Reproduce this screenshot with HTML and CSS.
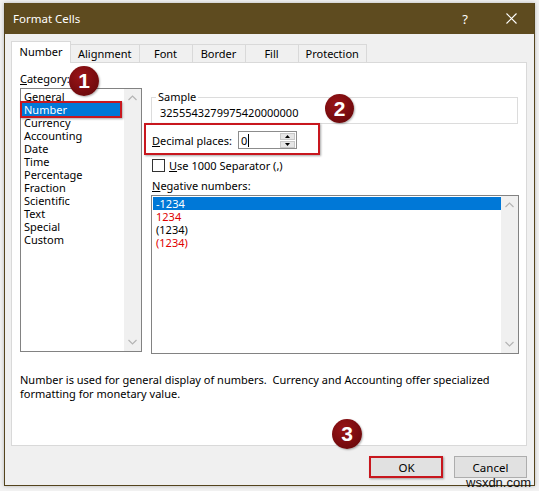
FILE: index.html
```html
<!DOCTYPE html>
<html lang="en">
<head>
    <meta charset="UTF-8">
    <meta name="viewport" content="width=device-width, initial-scale=1.0">
    <title>Format Cells</title>
    <link rel="stylesheet" href="styles.css">
</head>
<body>
    <div class="dialog">
        <div class="title-bar">
            <span class="title">Format Cells</span>
            <span class="title-btn help">?</span>
            <span class="title-btn close">
                <svg width="11" height="11" viewBox="0 0 11 11"><path d="M0.5 0.5 L10.5 10.5 M10.5 0.5 L0.5 10.5" stroke="#fff" stroke-width="1.1" fill="none"/></svg>
            </span>
        </div>
        <div class="dialog-body">
            <div class="tabs">
                <div class="tab active">Number</div>
                <div class="tab">Alignment</div>
                <div class="tab">Font</div>
                <div class="tab">Border</div>
                <div class="tab">Fill</div>
                <div class="tab">Protection</div>
            </div>
            <div class="tab-panel">
                <div class="panel-top">
                    <div class="category">
                        <div class="label"><u>C</u>ategory:</div>
                        <div class="listbox cat-list">
                            <ul class="items">
                                <li>General</li>
                                <li class="selected">Number</li>
                                <li>Currency</li>
                                <li>Accounting</li>
                                <li>Date</li>
                                <li>Time</li>
                                <li>Percentage</li>
                                <li>Fraction</li>
                                <li>Scientific</li>
                                <li>Text</li>
                                <li>Special</li>
                                <li>Custom</li>
                            </ul>
                            <div class="scrollbar">
                                <svg width="9" height="6" viewBox="0 0 9 6"><path d="M0.5 5 L4.5 1 L8.5 5" stroke="#b4b4b4" stroke-width="1.2" fill="none"/></svg>
                                <svg width="9" height="6" viewBox="0 0 9 6"><path d="M0.5 1 L4.5 5 L8.5 1" stroke="#b4b4b4" stroke-width="1.2" fill="none"/></svg>
                            </div>
                        </div>
                    </div>
                    <div class="options">
                        <fieldset class="sample">
                            <legend>Sample</legend>
                            <div class="sample-value">3255543279975420000000</div>
                        </fieldset>
                        <div class="decimal-row">
                            <span class="decimal-label"><u>D</u>ecimal places:</span>
                            <div class="spin-input">
                                <span class="spin-value">0</span>
                                <div class="spin-buttons">
                                    <span class="spin-btn"><svg width="7" height="4" viewBox="0 0 7 4"><path d="M0 4 L3.5 0 L7 4 Z" fill="#000"/></svg></span>
                                    <span class="spin-btn"><svg width="7" height="4" viewBox="0 0 7 4"><path d="M0 0 L3.5 4 L7 0 Z" fill="#000"/></svg></span>
                                </div>
                            </div>
                        </div>
                        <div class="check-row">
                            <span class="checkbox"></span>
                            <span><u>U</u>se 1000 Separator (,)</span>
                        </div>
                        <div class="label neg-label"><u>N</u>egative numbers:</div>
                        <div class="listbox neg-list">
                            <ul class="items">
                                <li class="selected">-1234</li>
                                <li class="red">1234</li>
                                <li>(1234)</li>
                                <li class="red">(1234)</li>
                            </ul>
                            <div class="scrollbar">
                                <svg width="9" height="6" viewBox="0 0 9 6"><path d="M0.5 5 L4.5 1 L8.5 5" stroke="#b4b4b4" stroke-width="1.2" fill="none"/></svg>
                                <svg width="9" height="6" viewBox="0 0 9 6"><path d="M0.5 1 L4.5 5 L8.5 1" stroke="#b4b4b4" stroke-width="1.2" fill="none"/></svg>
                            </div>
                        </div>
                    </div>
                </div>
                <p class="description">Number is used for general display of numbers.&nbsp; Currency and Accounting offer specialized<br>formatting for monetary value.</p>
            </div>
            <div class="buttons">
                <button class="btn">OK</button>
                <button class="btn">Cancel</button>
            </div>
        </div>
    </div>

    <div class="highlight hl-number"></div>
    <div class="highlight hl-decimal"></div>
    <div class="highlight hl-ok"></div>

    <div class="marker marker-1">1</div>
    <div class="marker marker-2">2</div>
    <div class="marker marker-3">3</div>

    <div class="watermark">wsxdn.com</div>
</body>
</html>
```

FILE: styles.css
```css
body {
    margin: 0;
    background-color: #f2f2f2;
    font-family: "Noto Sans", "Open Sans", sans-serif;
    font-size: 11px;
    color: #000;
    position: relative;
    height: 491px;
    overflow: hidden;
}
.dialog {
    margin: 3px 0 0 4px;
    width: 531px;
    height: 483px;
    box-sizing: border-box;
    border: 1px solid #54441d;
    background-color: #f0f0f0;
    box-shadow: 0 0 4px rgba(0, 0, 0, 0.25);
}
.title-bar {
    height: 31px;
    margin-top: -1px;
    background-color: #5e4b1f;
    color: #fff;
    display: flex;
    align-items: center;
}
.title {
    padding-left: 8px;
    font-size: 11.5px;
    flex: 1;
}
.title-btn {
    width: 46px;
    height: 31px;
    display: flex;
    align-items: center;
    justify-content: center;
}
.help {
    font-size: 13px;
}
.dialog-body {
    padding: 7px 7px 0 6px;
}
.tabs {
    display: flex;
    align-items: flex-end;
    height: 21px;
}
.tab {
    height: 18px;
    box-sizing: border-box;
    min-width: 54px;
    padding: 0 7px;
    border: 1px solid #d9d9d9;
    border-bottom: none;
    margin-left: -1px;
    background-color: #f0f0f0;
    display: flex;
    align-items: center;
    justify-content: center;
}
.tab:first-child {
    margin-left: 0;
}
.tab.active {
    height: 22px;
    min-width: 60px;
    margin-bottom: -1px;
    background-color: #fff;
    position: relative;
    z-index: 1;
    padding-bottom: 2px;
}
.tab-panel {
    height: 384px;
    box-sizing: border-box;
    border: 1px solid #d9d9d9;
    background-color: #fff;
    padding: 8px 7px 0 8px;
}
.panel-top {
    display: flex;
    gap: 9px;
}
.label {
    line-height: 16px;
    height: 16px;
    margin-bottom: 1px;
}
.listbox {
    border: 1px solid #828282;
    display: flex;
    box-sizing: border-box;
}
.items {
    list-style: none;
    margin: 0;
    padding: 1px 0 0 0;
    flex: 1;
}
.items li {
    height: 13px;
    line-height: 13px;
    padding-left: 3px;
    white-space: nowrap;
}
.items li.selected {
    background-color: #0078d7;
    color: #fff;
}
.items li.red {
    color: #e00000;
}
.cat-list {
    width: 122px;
    height: 264px;
}
.cat-list .items {
    padding-right: 2px;
}
.scrollbar {
    width: 17px;
    background-color: #f0f0f0;
    display: flex;
    flex-direction: column;
    justify-content: space-between;
    align-items: center;
    padding: 6px 0;
    box-sizing: border-box;
}
.options {
    flex: 1;
}
.sample {
    margin: 18px 1px 0 0;
    padding: 0 0 2px 8px;
    border: 1px solid #dcdcdc;
    min-width: 0;
}
.sample legend {
    margin-left: -4px;
    padding: 0 2px;
    line-height: 16px;
}
.sample-value {
    line-height: 16px;
}
.decimal-row {
    display: flex;
    align-items: center;
    height: 18px;
    margin-top: 7px;
    padding-left: 1px;
}
.decimal-label {
    width: 86px;
}
.spin-input {
    width: 59px;
    height: 18px;
    box-sizing: border-box;
    border: 1px solid #8c8c8c;
    display: flex;
    align-items: center;
    justify-content: space-between;
    padding-left: 2px;
}
.spin-value {
    border-right: 1px solid #000;
    padding-right: 1px;
    line-height: 13px;
}
.spin-buttons {
    display: flex;
    flex-direction: column;
    gap: 1px;
    padding: 0 1px;
}
.spin-btn {
    width: 15px;
    height: 7px;
    background-color: #e6e6e6;
    border: 1px solid #c8c8c8;
    box-sizing: border-box;
    display: flex;
    align-items: center;
    justify-content: center;
}
.spin-btn svg {
    width: 5px;
    height: 3px;
}
.check-row {
    display: flex;
    align-items: center;
    gap: 4px;
    margin-top: 10px;
    padding-left: 1px;
    height: 13px;
}
.checkbox {
    width: 13px;
    height: 13px;
    box-sizing: border-box;
    border: 1px solid #333;
    background-color: #fff;
}
.neg-label {
    margin-top: 6px;
    padding-left: 1px;
}
.neg-list {
    height: 159px;
    margin-top: 0;
}
.neg-list .items {
    padding-left: 1px;
    padding-right: 0;
}
.description {
    margin: 19px 0 0 0;
    line-height: 14px;
}
.buttons {
    display: flex;
    justify-content: flex-end;
    gap: 11px;
    margin-top: 10px;
}
.btn {
    width: 73px;
    height: 22px;
    background-color: #e1e1e1;
    border: 1px solid #adadad;
    font-family: "Noto Sans", "Open Sans", sans-serif;
    font-size: 11.5px;
    color: #000;
    padding: 0;
}
.highlight {
    position: absolute;
    box-sizing: border-box;
    border: 2px solid #c8171e;
    box-shadow: 1px 1px 2px rgba(0, 0, 0, 0.35);
}
.hl-number {
    left: 20px;
    top: 101px;
    width: 102px;
    height: 17px;
}
.hl-decimal {
    left: 144px;
    top: 123px;
    width: 176px;
    height: 32px;
}
.hl-ok {
    left: 369px;
    top: 456px;
    width: 74px;
    height: 22px;
}
.marker {
    position: absolute;
    width: 30px;
    height: 30px;
    border-radius: 50%;
    background: radial-gradient(circle at 40% 35%, #9a1418 0%, #7a0c0f 55%, #5e0709 100%);
    color: #fff;
    font-family: "Liberation Sans", Arial, sans-serif;
    font-weight: bold;
    font-size: 21px;
    display: flex;
    align-items: center;
    justify-content: center;
    box-shadow: 1px 1px 2px rgba(0, 0, 0, 0.3);
}
.marker-1 {
    left: 69px;
    top: 66px;
}
.marker-2 {
    left: 325px;
    top: 94px;
    width: 29px;
    height: 29px;
}
.marker-3 {
    left: 332px;
    top: 419px;
}
.watermark {
    position: absolute;
    left: 466px;
    top: 475px;
    font-family: "Liberation Sans", Arial, sans-serif;
    font-size: 13px;
    color: #111;
}
```
